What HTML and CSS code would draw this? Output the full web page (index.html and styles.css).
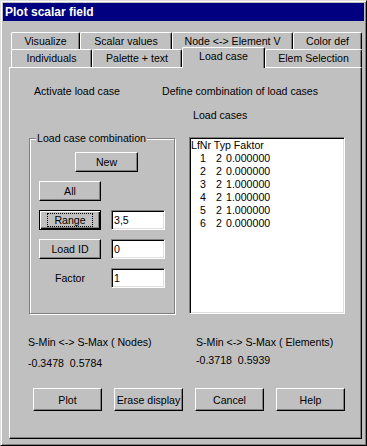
FILE: index.html
```html
<!DOCTYPE html>
<html lang="en">

<head>
    <meta charset="UTF-8" />
    <title>Plot scalar field</title>

    <!-- css -->

    <link rel="stylesheet" href="styles.css">

</head>

<body>
    <div class="window">
        <div class="titlebar">Plot scalar field</div>

        <div class="tabs">
            <div class="tab-row back">
                <div class="tab" style="width: 69px;">Visualize</div>
                <div class="tab" style="width: 92px;">Scalar values</div>
                <div class="tab" style="width: 121px;">Node &lt;-&gt; Element V</div>
                <div class="tab" style="width: 69px;">Color def</div>
            </div>
            <div class="tab-row front">
                <div class="tab" style="width: 81px;">Individuals</div>
                <div class="tab" style="width: 90px;">Palette + text</div>
                <div class="tab active" style="width: 83px;">Load case</div>
                <div class="tab" style="width: 97px;">Elem Selection</div>
            </div>
        </div>

        <div class="panel">
            <div class="heads">
                <span class="head-a">Activate load case</span>
                <span>Define combination of load cases</span>
            </div>
            <div class="sub">Load cases</div>

            <div class="main">
                <div class="group">
                    <span class="group-title">Load case combination</span>
                    <div class="g-row"><button class="btn new">New</button></div>
                    <div class="g-row"><button class="btn small">All</button></div>
                    <div class="g-row">
                        <button class="btn small default"><span class="focus">Range</span></button>
                        <input class="field" type="text" value="3,5">
                    </div>
                    <div class="g-row">
                        <button class="btn small">Load ID</button>
                        <input class="field" type="text" value="0">
                    </div>
                    <div class="g-row">
                        <span class="factor">Factor</span>
                        <input class="field" type="text" value="1">
                    </div>
                </div>

                <div class="listbox">
                    <div class="lb-head">LfNr Typ Faktor</div>
                    <div class="lb-row"><span class="c1">1</span><span class="c2">2</span><span class="c3">0.000000</span></div>
                    <div class="lb-row"><span class="c1">2</span><span class="c2">2</span><span class="c3">0.000000</span></div>
                    <div class="lb-row"><span class="c1">3</span><span class="c2">2</span><span class="c3">1.000000</span></div>
                    <div class="lb-row"><span class="c1">4</span><span class="c2">2</span><span class="c3">1.000000</span></div>
                    <div class="lb-row"><span class="c1">5</span><span class="c2">2</span><span class="c3">1.000000</span></div>
                    <div class="lb-row"><span class="c1">6</span><span class="c2">2</span><span class="c3">0.000000</span></div>
                </div>
            </div>

            <div class="stats">
                <div class="stat nodes">
                    <div>S-Min &lt;-&gt; S-Max ( Nodes)</div>
                    <div class="val">-0.3478&nbsp; 0.5784</div>
                </div>
                <div class="stat elems">
                    <div>S-Min &lt;-&gt; S-Max ( Elements)</div>
                    <div class="val">-0.3718&nbsp; 0.5939</div>
                </div>
            </div>

            <div class="buttons">
                <button class="btn wide">Plot</button>
                <button class="btn wide">Erase display</button>
                <button class="btn wide">Cancel</button>
                <button class="btn wide">Help</button>
            </div>
        </div>
    </div>
</body>

</html>
```

FILE: styles.css
```css
body {
    margin: 0;
    font-family: "Liberation Sans", Arial, sans-serif;
    font-size: 10.6px;
    line-height: 13px;
    color: #000;
    background: #c0c0c0;
}

.window {
    box-sizing: border-box;
    width: 367px;
    height: 446px;
    padding: 2px;
    background: #c0c0c0;
    border: 1px solid;
    border-color: #dfdfdf #000 #000 #dfdfdf;
    box-shadow: inset 1px 1px #fff, inset -1px -1px #808080;
}

.titlebar {
    height: 18px;
    line-height: 18px;
    padding-left: 2px;
    background: #000080;
    color: #fff;
    font-size: 12px;
    font-weight: bold;
}

/* tabs */

.tabs {
    margin-top: 11px;
    padding-left: 8px;
}

.tab-row {
    display: flex;
    align-items: flex-end;
}

.tab-row.back {
    height: 17px;
}

.tab-row.front {
    height: 18px;
}

.tab {
    box-sizing: border-box;
    height: 100%;
    text-align: center;
    line-height: 16px;
    border-top: 1px solid #fff;
    border-left: 1px solid #fff;
    border-right: 1px solid #000;
    border-radius: 2px 2px 0 0;
    box-shadow: inset -1px 0 #808080;
    background: #c0c0c0;
}

.tab.active {
    position: relative;
    z-index: 1;
    height: 21px;
    margin-bottom: -1px;
    line-height: 17px;
}

/* panel */

.panel {
    box-sizing: border-box;
    width: 353px;
    height: 372px;
    margin-left: 6px;
    padding-top: 17px;
    border-top: 1px solid #fff;
    border-left: 1px solid #fff;
    border-right: 1px solid #000;
    border-bottom: 1px solid #000;
    box-shadow: inset -1px -1px #808080;
}

.heads {
    display: flex;
    padding-left: 24px;
}

.head-a {
    width: 128px;
}

.sub {
    margin-top: 11px;
    padding-left: 183px;
}

.main {
    display: flex;
    align-items: flex-start;
    margin-top: 15px;
    padding-left: 19px;
}

.group {
    box-sizing: border-box;
    display: flex;
    flex-direction: column;
    width: 146px;
    height: 176px;
    margin-top: 1px;
    padding-left: 9px;
    border: 1px solid #808080;
    box-shadow: inset 1px 1px #fff, 1px 1px #fff;
}

.group-title {
    align-self: flex-start;
    margin: -7px 0 7px -3px;
    padding: 0 1px;
    background: #c0c0c0;
}

.g-row {
    display: flex;
    align-items: center;
    height: 20px;
    margin-bottom: 9px;
}

.g-row .field {
    margin-left: 10px;
}

.factor {
    width: 62px;
    text-align: center;
}

.listbox {
    box-sizing: border-box;
    width: 156px;
    height: 177px;
    margin-left: 14px;
    padding-left: 1px;
    background: #fff;
    border: 1px solid;
    border-color: #808080 #fff #fff #808080;
    box-shadow: inset 1px 1px #000, inset -1px -1px #dfdfdf;
    padding-top: 1px;
}

.lb-row span {
    display: inline-block;
}

.c1 {
    width: 15px;
    text-align: right;
}

.c2 {
    width: 16px;
    text-align: right;
}

.c3 {
    margin-left: 4px;
}

/* bottom */

.stats {
    display: flex;
    margin-top: 22px;
    padding-left: 18px;
}

.stat.nodes {
    width: 168px;
}

.nodes .val {
    margin-top: 8px;
}

.elems .val {
    margin-top: 5px;
}

.buttons {
    display: flex;
    gap: 12px;
    margin-top: 18px;
    padding-left: 23px;
}

/* controls */

.btn {
    box-sizing: border-box;
    height: 20px;
    padding: 0;
    font-family: inherit;
    font-size: 10.6px;
    color: #000;
    background: #c0c0c0;
    border: 1px solid;
    border-color: #fff #000 #000 #fff;
    box-shadow: inset -1px -1px #808080;
}

.btn.new {
    width: 63px;
    margin-left: 36px;
}

.btn.small {
    width: 62px;
}

.btn.wide {
    width: 69px;
    height: 23px;
}

.btn.default {
    border-color: #000;
    box-shadow: inset 1px 1px #fff, inset -1px -1px #000, inset -2px -2px #808080;
}

.focus {
    padding: 0 6px;
    outline: 1px dotted #000;
    outline-offset: 0;
}

.field {
    box-sizing: border-box;
    width: 54px;
    height: 20px;
    padding: 0 2px;
    font-family: inherit;
    font-size: 10.6px;
    background: #fff;
    border: 1px solid;
    border-color: #808080 #fff #fff #808080;
    box-shadow: inset 1px 1px #000, inset -1px -1px #dfdfdf;
    outline: none;
}
```
